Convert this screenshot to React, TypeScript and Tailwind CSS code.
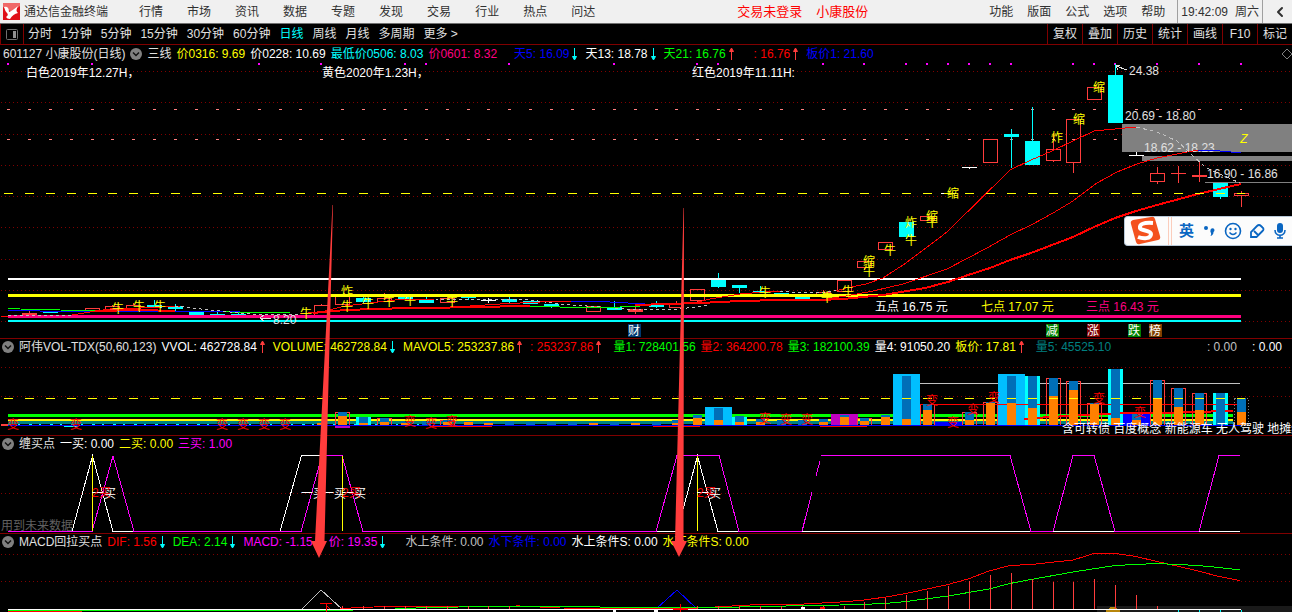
import type { ReactNode } from 'react';
import { ChevronLeft } from 'lucide-react';

const menus = ['行情', '市场', '资讯', '数据', '专题', '发现', '交易', '行业', '热点', '问达'];
const tools = ['功能', '版面', '公式', '选项', '帮助'];
const periods = ['分时', '1分钟', '5分钟', '15分钟', '30分钟', '60分钟', '日线', '周线', '月线', '多周期', '更多 >'];
const actions = ['复权', '叠加', '历史', '统计', '画线', 'F10', '标记'];

// x of the n-th trading day
const dayX = (n: number) => Math.round(8 + n * 20.89);

type Legend = { text: string; color: string; arrow?: 'up' | 'down'; space?: string };

const priceLegend: Legend[] = [
    { text: '三线', color: 'text-[#e0e0e0]' },
    { text: '价0316: 9.69', color: 'text-[#ffff00]' },
    { text: '价0228: 10.69', color: 'text-white' },
    { text: '最低价0506: 8.03', color: 'text-[#00ffff]' },
    { text: '价0601: 8.32', color: 'text-[#ff0080]' },
    { text: '天5: 16.09', color: 'text-[#0000ff]', arrow: 'down', space: 'ml-3' },
    { text: '天13: 18.78', color: 'text-white', arrow: 'down' },
    { text: '天21: 16.76', color: 'text-[#00ff00]', arrow: 'up' },
    { text: ': 16.76', color: 'text-[#ff0000]', arrow: 'up', space: 'ml-3' },
    { text: '板价1: 21.60', color: 'text-[#0000ff]' },
];

const volumeLegend: Legend[] = [
    { text: 'VVOL: 462728.84', color: 'text-white', arrow: 'up' },
    { text: 'VOLUME: 462728.84', color: 'text-[#ffff00]', arrow: 'down' },
    { text: 'MAVOL5: 253237.86', color: 'text-[#ffff00]', arrow: 'up' },
    { text: ': 253237.86', color: 'text-[#ff0000]', arrow: 'up' },
    { text: '量1: 728401.56', color: 'text-[#00ff00]', space: 'ml-1' },
    { text: '量2: 364200.78', color: 'text-[#ff0000]' },
    { text: '量3: 182100.39', color: 'text-[#00ff00]' },
    { text: '量4: 91050.20', color: 'text-white' },
    { text: '板价: 17.81', color: 'text-[#ffff00]', arrow: 'up' },
    { text: '量5: 45525.10', color: 'text-[#008080]', space: 'ml-1' },
    { text: ': 0.00', color: 'text-[#c0c0c0]', space: 'ml-auto' },
    { text: ': 0.00', color: 'text-white', space: 'ml-2.5' },
];

const buyLegend: Legend[] = [
    { text: '一买: 0.00', color: 'text-white' },
    { text: '二买: 0.00', color: 'text-[#ffff00]' },
    { text: '三买: 1.00', color: 'text-[#ff00ff]' },
];

const macdLegend: Legend[] = [
    { text: 'DIF: 1.56', color: 'text-[#ff0000]', arrow: 'down' },
    { text: 'DEA: 2.14', color: 'text-[#00ff00]', arrow: 'down' },
    { text: 'MACD: -1.15', color: 'text-[#ff00ff]', arrow: 'down' },
    { text: '价: 19.35', color: 'text-[#ff00ff]', arrow: 'down' },
    { text: '水上条件: 0.00', color: 'text-[#c0c0c0]', space: 'ml-3' },
    { text: '水下条件: 0.00', color: 'text-[#0000ff]' },
    { text: '水上条件S: 0.00', color: 'text-white' },
    { text: '水下条件S: 0.00', color: 'text-[#ffff00]' },
];

// kind: r = hollow red, R = solid red, c = cyan, w = white
type Candle = [day: number, kind: string, high: number, top: number, bottom: number, low: number];
const candles: Candle[] = [
    [1, 'R', 311, 313, 315, 315], [2, 'c', 312, 312, 313, 313], [4, 'r', 308, 308, 310, 310],
    [5, 'r', 305, 306, 309, 309], [6, 'r', 303, 305, 309, 309], [7, 'c', 300, 305, 308, 308],
    [8, 'c', 304, 306, 309, 311], [9, 'c', 312, 312, 316, 316], [10, 'c', 311, 314, 315, 315],
    [11, 'c', 311, 314, 315, 315], [15, 'r', 304, 305, 315, 315], [16, 'r', 296, 296, 304, 304],
    [17, 'c', 295, 298, 302, 304], [18, 'r', 293, 298, 301, 301], [19, 'c', 296, 297, 299, 299],
    [20, 'c', 296, 300, 303, 303], [21, 'r', 297, 298, 302, 302], [22, 'c', 297, 297, 298, 300],
    [23, 'w', 298, 300, 301, 303], [24, 'c', 297, 299, 302, 304], [25, 'c', 301, 301, 304, 304],
    [26, 'c', 304, 304, 307, 308], [27, 'c', 307, 307, 308, 308], [28, 'r', 306, 306, 311, 311],
    [29, 'c', 301, 307, 310, 310], [30, 'R', 306, 309, 312, 314], [31, 'c', 301, 305, 307, 308],
    [32, 'r', 301, 303, 307, 307], [33, 'r', 289, 289, 300, 302], [34, 'c', 273, 280, 287, 288],
    [35, 'c', 285, 285, 288, 293], [36, 'c', 286, 291, 293, 293], [37, 'c', 293, 293, 294, 294],
    [38, 'c', 296, 296, 300, 300], [39, 'r', 290, 292, 294, 294], [40, 'r', 280, 280, 291, 291],
    [41, 'r', 261, 261, 267, 270], [42, 'r', 242, 242, 249, 249], [43, 'c', 222, 222, 237, 239],
    [44, 'r', 216, 216, 220, 220], [45, 'w', 193, 193, 194, 194], [46, 'w', 167, 167, 168, 169],
    [47, 'r', 139, 139, 162, 162], [48, 'c', 129, 134, 137, 168], [49, 'c', 107, 141, 165, 165],
    [50, 'r', 133, 149, 160, 162], [51, 'r', 119, 119, 162, 173], [52, 'r', 87, 87, 99, 99],
    [53, 'c', 64, 75, 123, 123], [54, 'w', 152, 155, 156, 156], [55, 'r', 167, 173, 181, 184],
    [56, 'R', 166, 173, 174, 183], [57, 'R', 162, 175, 177, 182], [58, 'c', 183, 183, 197, 199],
    [59, 'r', 191, 193, 195, 207],
];

const candleColors: Record<string, string> = { r: '#ff3c3c', R: '#ff3c3c', c: '#00ffff', w: '#ffffff' };

const marks: [string, number, number][] = [
    ['牛', 118, 308], ['牛', 139, 306], ['牛', 160, 306], ['牛', 306, 313], ['牛', 347, 306], ['牛', 368, 303],
    ['牛', 389, 301], ['牛', 410, 300], ['牛', 452, 301], ['牛', 765, 292], ['牛', 827, 297], ['牛', 848, 291],
    ['牛', 869, 271], ['牛', 890, 250], ['牛', 911, 240], ['牛', 932, 222], ['炸', 347, 291], ['炸', 911, 222],
    ['炸', 1057, 137], ['缩', 869, 261], ['缩', 932, 216], ['缩', 953, 193], ['缩', 1079, 119], ['缩', 1099, 87],
];

const flagDays = [0, 4, 12, 15, 19, 20, 24, 29, 33, 34, 39, 41, 43, 44, 45, 46, 47, 48, 51, 52, 53, 55, 57, 59];

const badges: [string, number, string][] = [
    ['财', 634, '#003870'],
    ['减', 1052, '#008000'],
    ['涨', 1093, '#800000'],
    ['跌', 1134, '#008000'],
    ['榜', 1155, '#804000'],
];

// frame: c = cyan block, r = red outline, b = light-blue block, p = purple block, n = navy block, d = dotted
type Volume = [day: number, frame: string, top: number, blue: number, orange: number];
const volumes: Volume[] = [
    [15, '', 425, 425, 423], [16, 'r', 412, 412, 416], [17, 'c', 417, 417, 423], [18, 'r', 418, 418, 422],
    [19, '', 421, 421, 423], [20, '', 421, 421, 425], [21, 'r', 420, 420, 422], [22, '', 421, 421, 422],
    [23, '', 421, 421, 423], [24, '', 421, 421, 425], [25, '', 422, 422, 425], [26, '', 422, 422, 425],
    [27, '', 422, 422, 425], [28, '', 422, 422, 423], [29, '', 422, 422, 425], [30, '', 422, 422, 423],
    [31, '', 422, 422, 425], [32, '', 420, 420, 423], [33, '', 415, 415, 418], [34, 'b', 407, 408, 420],
    [35, 'c', 417, 416, 422], [36, '', 419, 419, 422], [37, '', 420, 420, 425], [38, '', 420, 420, 425],
    [39, '', 419, 419, 422], [40, 'p', 414, 415, 417], [41, 'r', 418, 418, 421], [42, '', 415, 415, 417],
    [43, 'b', 374, 376, 419], [44, 'r', 404, 404, 410], [45, 'n', 422, 425, 425], [46, 'r', 412, 412, 420],
    [47, 'r', 402, 402, 403], [48, 'b', 374, 376, 403], [49, 'c', 376, 376, 408], [50, 'r', 378, 378, 396],
    [51, 'r', 381, 381, 390], [52, 'r', 403, 403, 404], [53, 'c', 369, 369, 418], [54, 'n', 414, 414, 420],
    [55, 'r', 380, 380, 398], [56, 'r', 388, 388, 407], [57, 'r', 393, 393, 410], [58, 'c', 393, 393, 425],
    [59, 'd', 398, 398, 412],
];

const turns: [number, number][] = [
    [13, 424], [76, 424], [222, 424], [243, 424], [264, 424], [285, 424], [410, 421], [431, 423], [452, 421],
    [765, 418], [786, 419], [807, 419], [932, 400], [953, 422], [973, 409], [994, 397], [1099, 398], [1140, 412],
];

const macdBars: [number, number][] = [
    [41, 602], [42, 598], [43, 595], [44, 591], [45, 586], [46, 581], [47, 575], [48, 573],
    [49, 579], [50, 582], [51, 582], [52, 579], [53, 585], [54, 595], [55, 606],
];

function Trend({ dir }: { dir: 'up' | 'down' }) {
    return (
        <svg className={dir === 'up' ? 'w-[11px] h-3.5 shrink-0 text-[#ff3c3c]' : 'w-[11px] h-3.5 shrink-0 text-[#00ffff]'} viewBox="0 0 11 14">
            <path
                d={dir === 'up' ? 'M5.5 13V2M3.5 4.5 5.5 1l2 3.5z' : 'M5.5 1v11M3.5 9.5l2 3.5 2-3.5z'}
                fill="currentColor"
                stroke="currentColor"
            />
        </svg>
    );
}

function TitleRow({ title, items, circleFirst, className }: { title: string; items: Legend[]; circleFirst?: boolean; className: string }) {
    const toggle = (
        <button aria-label="指标菜单" className="shrink-0">
            <svg className="w-3 h-3" viewBox="0 0 12 12">
                <circle cx="6" cy="6" r="6" fill="#808080" />
                <path d="M3 4.5 6 7.5l3-3" fill="none" stroke="#111" strokeWidth="1.5" />
            </svg>
        </button>
    );
    return (
        <div className={`flex items-center gap-[5px] overflow-hidden ${className}`}>
            {circleFirst && toggle}
            <span className="text-[#e0e0e0]">{title}</span>
            {!circleFirst && toggle}
            {items.map((item, i) => (
                <span key={i} className={`flex items-center ${item.color} ${item.space ?? ''}`}>
                    {item.text}
                    {item.arrow && <Trend dir={item.arrow} />}
                </span>
            ))}
        </div>
    );
}

function Grid({ rows }: { rows: number[] }) {
    return (
        <>
            {rows.map((y) => (
                <line key={y} x1="1" x2="100%" y1={y + 0.5} y2={y + 0.5} stroke="#800000" strokeDasharray="1 3" />
            ))}
        </>
    );
}

function Plot({ top, className, children }: { top: number; className: string; children: ReactNode }) {
    return (
        <svg className={`block w-full ${className}`} shapeRendering="crispEdges" fontSize="12">
            <g transform={`translate(0 ${-top})`}>{children}</g>
        </svg>
    );
}

function PriceChart() {
    return (
        <Plot top={63} className="h-[275px]">
            <Grid rows={[71, 102, 134, 165, 196, 227, 259, 290, 321]} />
            {flagDays.map((n) => (
                <rect key={n} x={dayX(n) - 1} y="63" width="2" height="2" fill="#ff00ff" />
            ))}
            {[109, 139].map((y) => (
                <line key={y} x1="7" x2="1242" y1={y + 0.5} y2={y + 0.5} stroke="#ff8080" strokeDasharray="3 17.89" />
            ))}

            <rect x="1122" y="124" width="100%" height="28" fill="#808080" />
            <text x="1144" y="152" fill="#e0e0e0">18.62 - 18.23</text>
            <rect x="1142" y="152" width="100%" height="4" fill="#000" />
            <rect x="1142" y="156" width="100%" height="5" fill="#808080" />
            <line x1="1205" x2="100%" y1="182.5" y2="182.5" stroke="#808080" />

            {candles.map(([n, kind, high, top, bottom, low]) => {
                const x = dayX(n);
                const color = candleColors[kind];
                return (
                    <g key={n} stroke={color} fill={color}>
                        {high < top && <line x1={x + 0.5} x2={x + 0.5} y1={high} y2={top} />}
                        {low > bottom && <line x1={x + 0.5} x2={x + 0.5} y1={bottom} y2={low} />}
                        {kind === 'r' ? (
                            <rect x={x - 6.5} y={top + 0.5} width="14" height={bottom - top} fill="none" />
                        ) : (
                            <rect x={x - 7} y={top} width="15" height={bottom - top} stroke="none" />
                        )}
                    </g>
                );
            })}

            <rect x="8" y="278" width="1233" height="2" fill="#fff" />
            <rect x="8" y="294" width="1233" height="3" fill="#ffff00" />
            <rect x="8" y="315" width="1233" height="3" fill="#ff0080" />
            <rect x="8" y="320" width="1233" height="2" fill="#00ffff" />
            <rect x="1" y="316" width="7" height="1" fill="#ff0000" />

            <g fill="none">
                <polyline points="8,310 40,311 130,311 240,312 300,312" stroke="#0000ff" />
                <polyline points="8,308 20,309 60,310 107,311 225,311 230,312 290,313 320,313" stroke="#00ff00" />
                <polyline points="8,315 72,315" stroke="#c0c0c0" strokeDasharray="3 3" />
                <polyline points="72,315 90,312 110,309 140,308 180,306" stroke="#ff0000" />
                <polyline points="95,311 140,310 175,311" stroke="#ff0000" strokeWidth="2" />
                <polyline points="175,306 210,310 250,314 300,315" stroke="#c0c0c0" strokeDasharray="3 3" />
                <polyline points="300,314 325,311 345,306 370,303 395,300 435,299" stroke="#ff0000" />
                <polyline points="435,299 530,300 560,304 600,307 640,310 680,309 710,305" stroke="#c0c0c0" strokeDasharray="3 3" />
                <polyline points="313,313 345,310 375,309 410,308 430,308 470,307 530,306" stroke="#ff0000" strokeWidth="2" />
                <polyline points="470,306 500,304 540,302 575,301" stroke="#ff0000" />
                <polyline points="570,301 610,302 645,304" stroke="#0000ff" />
                <polyline points="530,306 560,307 620,307 640,306" stroke="#00ff00" />
                <polyline
                    points="635,305 700,303 740,301 780,300 820,300 843,299 883,295 925,288 948,282 968,275 990,268 1010,260 1031,253 1052,245 1073,237 1094,227 1115,218 1136,211 1157,205 1198,194 1219,189 1241,184"
                    stroke="#ff0000"
                    strokeWidth="2"
                />
                <polyline points="690,304 710,299 740,294 765,292 780,291" stroke="#ff0000" />
                <polyline points="780,291 800,293 825,292 840,290" stroke="#c0c0c0" strokeDasharray="3 3" />
                <polyline
                    points="820,300 846,296 873,291 903,284 947,269 987,248 1010,235 1033,224 1053,213 1073,201 1097,183 1117,172 1137,164 1157,158 1177,154 1198,150"
                    stroke="#ff0000"
                />
                <polyline points="1198,150 1220,151 1241,153" stroke="#0000ff" />
                <polyline
                    points="836,291 846,288 866,284 883,278 906,263 947,232 1010,170 1031,160 1052,151 1073,141 1094,131 1115,129 1136,127"
                    stroke="#ff0000"
                />
                <polyline points="1136,127 1157,132 1177,141 1190,153 1205,167 1220,174 1240,183" stroke="#c0c0c0" strokeDasharray="4 3" />
            </g>

            <line x1="4" x2="1245" y1="193.5" y2="193.5" stroke="#ffff00" strokeDasharray="9 11.89" />

            <g textAnchor="middle" fill="#ffff00">
                {marks.map(([text, x, y], i) => (
                    <text key={i} x={x} y={y + 5}>{text}</text>
                ))}
                <text x="1244" y="143" fontStyle="italic">Z</text>
            </g>

            <g fill="#fff">
                <text x="26" y="77">白色2019年12.27H，</text>
                <text x="322" y="77">黄色2020年1.23H，</text>
                <text x="692" y="77">红色2019年11.11H:</text>
            </g>
            <g fill="#e0e0e0">
                <text x="1129" y="75">24.38</text>
                <text x="1125" y="120">20.69 - 18.80</text>
                <text x="1207" y="178">16.90 - 16.86</text>
                <text x="273" y="324">8.20</text>
            </g>
            <path d="M1127 70l-11-4m4-1-4 1 2 4M271 318h-11m4-3-4 3 4 3" fill="none" stroke="#e0e0e0" />
            <text x="875" y="311" fill="#fff">五点 16.75 元</text>
            <text x="981" y="311" fill="#ffff00">七点 17.07 元</text>
            <text x="1086" y="311" fill="#ff0080">三点 16.43 元</text>

            {badges.map(([text, x, color]) => (
                <g key={text}>
                    <rect x={x - 6} y="324" width="13" height="13" fill={color} />
                    <text x={x} y="335" textAnchor="middle" fill="#fff">{text}</text>
                </g>
            ))}
        </Plot>
    );
}

function VolumeFrame({ frame, x, top }: { frame: string; x: number; top: number }) {
    const height = 425 - top;
    if (frame === 'c') return <rect x={x - 7} y={top} width="15" height={height} fill="#00ffff" />;
    if (frame === 'b') return <rect x={x - 13} y={top} width="27" height={height} fill="#00bfff" />;
    if (frame === 'p') return <rect x={x - 13} y={top} width="27" height={height} fill="#c000c0" />;
    if (frame === 'n') return <rect x={x - 13} y={top} width="27" height={height} fill="#0000ff" />;
    if (frame === 'r') return <rect x={x - 6.5} y={top + 0.5} width="14" height={height} fill="none" stroke="#ff3c3c" />;
    if (frame === 'd') return <rect x={x - 6.5} y={top + 0.5} width="14" height={height} fill="none" stroke="#808080" strokeDasharray="1 2" />;
    return null;
}

function VolumeChart() {
    return (
        <Plot top={355} className="h-20">
            <Grid rows={[367, 396]} />
            <line x1="920" x2="1240" y1="383.5" y2="383.5" stroke="#c0c0c0" />
            <rect x="8" y="421" width="1225" height="3" fill="#008080" />
            <rect x="8" y="419" width="1225" height="2" fill="#ffff00" />
            <rect x="8" y="414" width="1225" height="3" fill="#00ff00" />
            <line x1="8" x2="430" y1="424.5" y2="424.5" stroke="#00ffff" strokeDasharray="3 7 2 9" />
            <rect x="1" y="424" width="7" height="2" fill="#ff3c3c" />
            <rect x="64" y="426" width="14" height="1" fill="#00ffff" />
            {volumes.map(([n, frame, top]) => (
                <VolumeFrame key={n} frame={frame} x={dayX(n)} top={top} />
            ))}
            <line x1="920" x2="1237" y1="404.5" y2="404.5" stroke="#ff0000" />
            <polyline points="1024,419 1050,417 1120,413 1160,413 1190,412 1233,411" fill="none" stroke="#ff0000" strokeWidth="2" />
            {volumes.map(([n, , , blue, orange]) => (
                <g key={n}>
                    <rect x={dayX(n) - 4} y={blue} width="9" height={425 - blue} fill="#006fb8" />
                    <rect x={dayX(n) - 4} y={orange} width="9" height={425 - orange} fill="#ff8000" />
                </g>
            ))}
            <rect x="8" y="425" width="1233" height="1" fill="#0000ff" />
            <rect x="335" y="426" width="15" height="2" fill="#c000c0" />
            <path d="M430 426.5h62M653 426.5h47M820 426.5h47" stroke="#ff0000" />
            <line x1="4" x2="1245" y1="398.5" y2="398.5" stroke="#ffff00" strokeDasharray="9 11.89" />
            <g textAnchor="middle" fill="#ff0000">
                {turns.map(([x, y]) => (
                    <text key={x} x={x} y={y + 5}>变</text>
                ))}
            </g>
            <text x="1062" y="433" fill="#fff">含可转债 百度概念 新能源车 无人驾驶 地摊经济</text>
        </Plot>
    );
}

function BuyPointChart() {
    return (
        <Plot top={452} className="h-[81px]">
            <Grid rows={[493]} />
            <text x="1" y="530" fill="#606060">用到未来数据</text>
            <g fill="none">
                <path d="M8 531.5H72L92.5 456 113 531.5H280L301.5 455.5H343M656 531.5H677L697.5 456 718 531.5H1240" stroke="#fff" />
                <path
                    d="M8 531.5H92L113 456 134 531.5H301L322 455.5H342L363 531.5H656L677 455.5H719L739 531.5H802L812 492M816 476L820 461M821 455.5H1010L1031 531.5H1053L1073 455.5H1094L1115 531.5H1199L1219 455.5H1240"
                    stroke="#ff00ff"
                />
                <path d="M92.5 456V531M342.5 456V531M697.5 456V531" stroke="#ffff00" />
            </g>
            <g fill="#fff">
                <text x="92" y="498">一买</text>
                <text x="301" y="498">一买</text>
                <text x="322" y="498">一买</text>
                <text x="342" y="498">一买</text>
                <text x="697" y="498">一买</text>
            </g>
            <g fill="#ff0000">
                <text x="92" y="497">2买</text>
                <text x="342" y="497">2买</text>
                <text x="697" y="497">2买</text>
            </g>
        </Plot>
    );
}

function MacdChart() {
    return (
        <Plot top={550} className="h-[62px]">
            <Grid rows={[554, 581]} />
            <rect x="1097" y="606" width="100%" height="6" fill="#1a1a1a" />
            <circle cx="1113" cy="615" r="8" fill="#b8860b" />
            <g fill="none">
                <polyline points="302,609 321,590 342,609" stroke="#c0c0c0" />
                <polyline points="656,609 677,590 697,609" stroke="#0000ff" />
                <polyline points="8,611.5 82,611.5" stroke="#ff0000" />
                <polyline
                    points="340,608.5 385,606.5 520,606 560,608 690,608.5 715,607 750,605 795,604.5 840,602 860,600.5 886,597 906,593.5 948,584.5 968,579 989,571 1010,565.5 1031,564.5 1073,560 1094,553.5 1115,553.5 1136,556.5 1157,561.5 1177,566 1198,571 1219,576.5 1240,580.5"
                    stroke="#ff0000"
                />
                <polyline points="8,610.5 353,610.5" stroke="#00ff00" />
                <polyline
                    points="395,608.5 480,606.5 600,607 720,607.5 760,606.5 840,605 860,604.5 885,603.5 906,601.5 948,596 989,589 1010,583.5 1031,579.5 1073,572 1115,565.5 1157,563.5 1177,564.5 1198,565.5 1219,567.5 1240,570"
                    stroke="#00ff00"
                />
            </g>
            {macdBars.map(([n, top]) => (
                <rect key={n} x={dayX(n)} y={top} width="1" height={609 - top} fill="#ff3c3c" />
            ))}
            {[16, 17, 18, 19, 20, 21, 22, 23, 24, 33, 34, 35, 36, 37, 38, 39, 40].map((n) => (
                <rect key={n} x={dayX(n)} y="606" width="1" height="3" fill="#ff3c3c" />
            ))}
            {[56, 57, 58, 59].map((n) => (
                <rect key={n} x={dayX(n)} y="610" width="1" height="2" fill="#00ffff" />
            ))}
            <rect x="8" y="609" width="1233" height="1" fill="#fff" />
            <path d="M320 603.5H332M326.5 603V612M327 606L330 609M673 609.5H688M680.5 604V612" fill="none" stroke="#ff0000" />
            <path d="M613 609h3v3h-3zM654 609h4v3h-4zM801 607h4v2h-4z" fill="#fff" />
            <path d="M820 607h5v2h-5z" fill="#ff0000" />
        </Plot>
    );
}

function InputMethodBar() {
    return (
        <div className="absolute right-0 top-[171px] flex h-[30px] items-center gap-[7px] rounded-l-sm border border-r-0 border-[#b8c8d8] bg-[#fcfcfc] pl-1 pr-1 text-[#0a66c2]">
            <svg className="w-8 h-[30px]" viewBox="0 0 32 30">
                <path d="M4 4Q1 5 2 8l5 18q1 3 4 2l18-4q3-1 2-4L26 3q-1-3-4-2z" fill="#f4511e" />
                <path d="M24 7Q10 6 11 12c1 3 11 2 11 6 0 5-8 5-13 3" fill="none" stroke="#fff" strokeWidth="4" />
            </svg>
            <div className="h-full w-1 border-x border-[#fbcdbc]" />
            <button className="text-[15px] font-bold">英</button>
            <button aria-label="标点">
                <svg className="w-4 h-5" viewBox="0 0 16 20">
                    <circle cx="5" cy="7" r="2" fill="currentColor" />
                    <path d="M9.5 9a2 2 0 1 1 3 2q0 3-3 4 1-2 .5-3-1-1-.5-3" fill="currentColor" />
                </svg>
            </button>
            <button aria-label="表情">
                <svg className="w-[18px] h-[18px]" viewBox="0 0 18 18">
                    <circle cx="9" cy="9" r="7.5" fill="none" stroke="currentColor" strokeWidth="1.6" />
                    <circle cx="6.5" cy="7" r="1.2" fill="currentColor" />
                    <circle cx="11.5" cy="7" r="1.2" fill="currentColor" />
                    <path d="M5.5 10.5q3.5 4 7 0" fill="none" stroke="currentColor" strokeWidth="1.4" />
                </svg>
            </button>
            <button aria-label="皮肤">
                <svg className="w-4 h-4" viewBox="0 0 16 16">
                    <path d="M2 14V9l6-6q2-2 4 0l1.5 1.5q2 1.5 0 3.5L7.5 14zM5 8l4 4" fill="none" stroke="currentColor" strokeWidth="1.8" />
                </svg>
            </button>
            <button aria-label="语音">
                <svg className="w-4 h-4" viewBox="0 0 16 16">
                    <rect x="5" y="0" width="6" height="10" rx="3" fill="currentColor" />
                    <path d="M3 7c0 7 10 7 10 0M8 12v3M5 15h6" fill="none" stroke="currentColor" strokeWidth="1.6" />
                </svg>
            </button>
        </div>
    );
}

export default function App() {
    return (
        <div className="min-h-screen overflow-hidden bg-black text-xs whitespace-nowrap font-['Liberation_Sans','Noto_Sans_CJK_SC',sans-serif]">
            <header className="flex h-6 items-center border-b border-[#707070] bg-[#f0f0f0] pl-[3px] text-[#303030]">
                <svg className="w-[17px] h-[17px] mr-1 shrink-0" viewBox="0 0 17 17">
                    <rect width="17" height="17" fill="#e01018" />
                    <path d="M0 0h17v3L9 9 0 4z" fill="#f06868" />
                    <path d="M1 4q5-1 5 5 3-1 9-6-3 5 0 7-5 1-8 6-3 0-4-2 3-2 1-4-2-2-3-6" fill="#fff" />
                </svg>
                <span>通达信金融终端</span>
                <nav className="ml-[31px] flex gap-6">
                    {menus.map((name) => (
                        <a key={name} href="#">{name}</a>
                    ))}
                </nav>
                <div className="ml-[142px] flex gap-3.5 text-[13px] text-[#ff0000]">
                    <a href="#">交易未登录</a>
                    <a href="#">小康股份</a>
                </div>
                <nav className="ml-auto flex gap-3.5">
                    {tools.map((name) => (
                        <a key={name} href="#">{name}</a>
                    ))}
                </nav>
                <div className="ml-3 flex h-full items-center gap-[7px] border-x border-[#a0a0a0] px-[3px]">
                    <span>19:42:09</span>
                    <span>周六</span>
                </div>
                <button aria-label="收起" className="flex w-[29px] justify-center pl-1">
                    <ChevronLeft className="w-4 h-4" strokeWidth={3} />
                </button>
            </header>

            <div className="flex h-[21px] items-stretch border-b border-[#800000] text-[#e0e0e0]">
                <button aria-label="侧栏" className="flex w-6 shrink-0 items-center justify-center border-x border-[#800000]">
                    <svg className="w-3 h-[11px]" viewBox="0 0 12 11">
                        <rect x="0.5" y="0.5" width="11" height="10" rx="1" fill="none" stroke="#707070" />
                        <rect x="7" y="2" width="3" height="7" fill="#909090" />
                    </svg>
                </button>
                <div className="ml-1 flex items-center gap-[9px]">
                    {periods.map((name) => (
                        <button key={name} className={name === '日线' ? 'text-[#00ffff]' : ''}>{name}</button>
                    ))}
                </div>
                <div className="ml-auto flex">
                    {actions.map((name) => (
                        <button key={name} className="w-[35px] border-l border-[#800000]">{name}</button>
                    ))}
                </div>
            </div>

            <main className="relative">
                <section className="border-b border-[#800000]">
                    <div className="flex items-center">
                        <TitleRow title="601127 小康股份(日线)" items={priceLegend} className="h-[18px] grow pl-[3px]" />
                        <svg className="w-2.5 h-2.5 shrink-0" viewBox="0 0 10 10">
                            <path d="M5 0l5 5-5 5-5-5z" fill="none" stroke="#808080" />
                        </svg>
                    </div>
                    <PriceChart />
                </section>
                <section className="border-b border-[#800000]">
                    <TitleRow circleFirst title="阿伟VOL-TDX(50,60,123)" items={volumeLegend} className="h-4 pl-0.5 pr-2.5" />
                    <VolumeChart />
                </section>
                <section className="border-b border-[#800000]">
                    <TitleRow circleFirst title="缠买点" items={buyLegend} className="h-4 pl-0.5" />
                    <BuyPointChart />
                </section>
                <section>
                    <TitleRow circleFirst title="MACD回拉买点" items={macdLegend} className="h-4 pl-0.5" />
                    <MacdChart />
                </section>

                {/* hand-drawn arrows running across all panels */}
                <svg className="pointer-events-none absolute inset-0 h-full w-full">
                    <g transform="translate(0 -45)" fill="#ff3c3c">
                        <path d="M332.5 205L333 205 324.5 541H327L319 558 311 541H315z" />
                        <path d="M683.5 208L684 208 683.5 541H687L679 557 671 541H675z" />
                    </g>
                </svg>
                <InputMethodBar />
            </main>
        </div>
    );
}
